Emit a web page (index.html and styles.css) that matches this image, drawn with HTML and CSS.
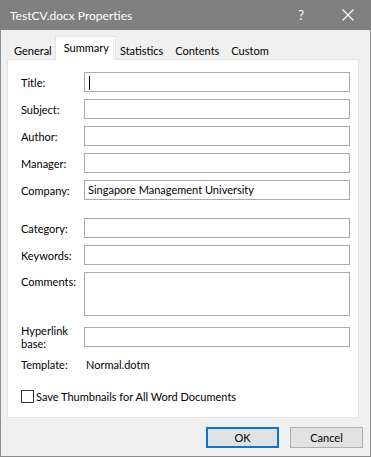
FILE: index.html
```html
<!DOCTYPE html>
<html>
<head>
    <link rel="stylesheet" href="styles.css">
</head>

<body>
    <div class="window">
        <div class="titlebar">
            <span class="title">TestCV.docx Properties</span>
            <span class="help">?</span>
            <svg class="close" width="12" height="12" viewBox="0 0 12 12">
                <path d="M0.5 0.5 L11.5 11.5 M11.5 0.5 L0.5 11.5" stroke="#fff" stroke-width="1.1" fill="none"/>
            </svg>
        </div>

        <div class="content">
            <div class="tabs">
                <div class="tab">General</div>
                <div class="tab selected">Summary</div>
                <div class="tab">Statistics</div>
                <div class="tab">Contents</div>
                <div class="tab">Custom</div>
            </div>

            <div class="panel">
                <div class="form">
                    <label>Title:</label>
                    <div class="field"><span class="caret"></span></div>

                    <label>Subject:</label>
                    <div class="field"></div>

                    <label>Author:</label>
                    <div class="field"></div>

                    <label>Manager:</label>
                    <div class="field"></div>

                    <label>Company:</label>
                    <div class="field">Singapore Management University</div>

                    <label class="spaced">Category:</label>
                    <div class="field spaced"></div>

                    <label>Keywords:</label>
                    <div class="field"></div>

                    <label class="top">Comments:</label>
                    <div class="field tall"></div>

                    <label class="two-line">Hyperlink<br>base:</label>
                    <div class="field nudged"></div>

                    <label class="template">Template:</label>
                    <div class="value template">Normal.dotm</div>
                </div>

                <div class="check-row">
                    <span class="checkbox"></span>
                    <span>Save Thumbnails for All Word Documents</span>
                </div>
            </div>

            <div class="buttons">
                <div class="button default">OK</div>
                <div class="button">Cancel</div>
            </div>
        </div>
    </div>
</body>
</html>
```

FILE: styles.css
```css
body {
    margin: 0;
    background: #f0f0f0;
    font-family: Lato, "Noto Sans", sans-serif;
    font-size: 11px;
    color: #000;
}

.window {
    width: 371px;
    height: 457px;
    box-sizing: border-box;
    border: 1px solid #8c8c8c;
    border-top: none;
    display: flex;
    flex-direction: column;
    background: #f0f0f0;
}

.titlebar {
    height: 30px;
    background: #808080;
    color: #fff;
    font-size: 12px;
    display: flex;
    align-items: center;
    padding-left: 10px;
    margin: 0 -1px;
}

.title {
    flex: 1;
}

.help {
    font-size: 13px;
    margin-right: 38px;
}

.close {
    margin-right: 17px;
}

.content {
    flex: 1;
    display: flex;
    flex-direction: column;
}

/* Tab strip */
.tabs {
    display: flex;
    align-items: flex-end;
    height: 30px;
    padding-left: 7px;
    position: relative;
    z-index: 1;
}

.tab {
    height: 21px;
    line-height: 22px;
    padding: 0 5px 0 6px;
    border: 1px solid #ededed;
    border-bottom: none;
    margin-right: -1px;
    box-sizing: border-box;
}

.tab:first-child {
    padding-left: 5px;
}

.tab.selected {
    height: 24px;
    line-height: 21px;
    background: #fff;
    margin: 0 -3px 0 -2px;
    padding: 0 6px 0 8px;
    border-color: #e3e3e3;
}

.panel {
    background: #fff;
    border: 1px solid #e3e3e3;
    margin: -1px 11px 0 6px;
    padding: 12px 8px 0 13px;
    height: 359px;
    box-sizing: border-box;
}

.form {
    display: grid;
    grid-template-columns: 63px 266px;
    row-gap: 7px;
    align-items: center;
}

.field {
    height: 20px;
    box-sizing: border-box;
    border: 1px solid #a9a9a9;
    padding-left: 3px;
    line-height: 18px;
    white-space: nowrap;
    overflow: hidden;
}

.field.tall {
    height: 44px;
}

.caret {
    display: inline-block;
    width: 1px;
    height: 14px;
    background: #000;
    vertical-align: middle;
    margin-left: 1px;
}

label.top {
    align-self: start;
    margin-top: 3px;
}

.spaced {
    margin-top: 11px;
}

.nudged {
    margin-top: 4px;
}

.two-line {
    line-height: 13px;
    margin: 1px 0 -3px;
}

.template {
    margin-top: 4px;
}

.value {
    padding-left: 2px;
}

.check-row {
    display: flex;
    align-items: center;
    gap: 2px;
    margin-top: 19px;
}

.checkbox {
    width: 13px;
    height: 13px;
    box-sizing: border-box;
    border: 1px solid #333;
    background: #fff;
}

.buttons {
    display: flex;
    justify-content: flex-end;
    gap: 11px;
    padding: 9px 7px 0 0;
}

.button {
    width: 73px;
    height: 21px;
    box-sizing: border-box;
    border: 1px solid #adadad;
    background: #e1e1e1;
    text-align: center;
    line-height: 19px;
}

.button.default {
    border: 2px solid #0078d7;
    line-height: 17px;
}
```
